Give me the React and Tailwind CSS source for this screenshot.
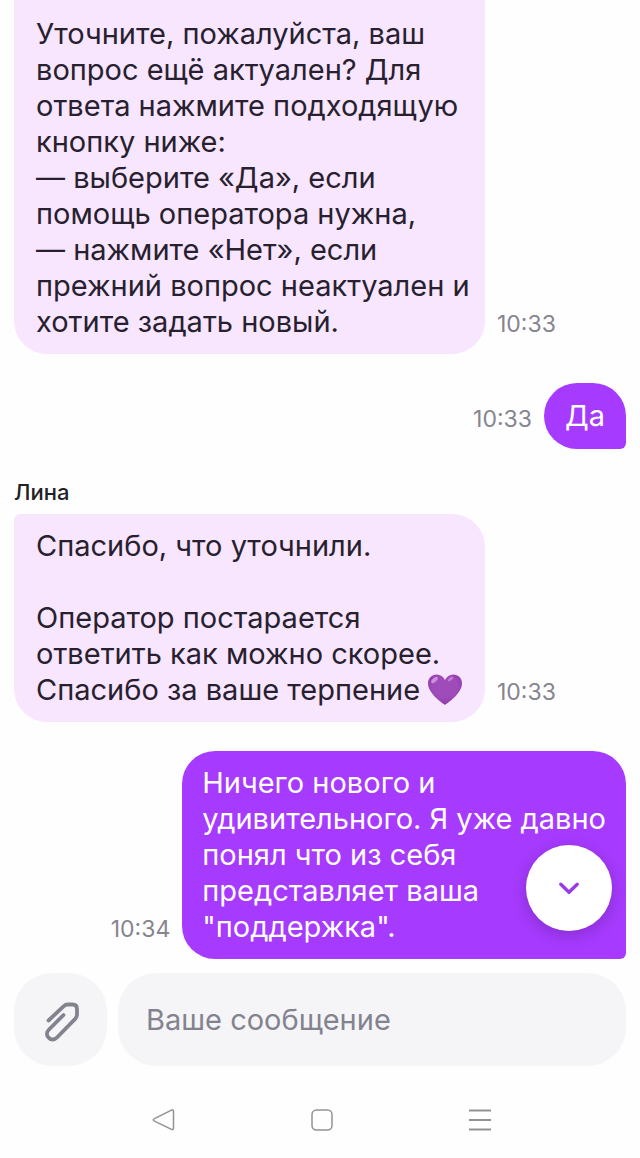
import { useState } from "react";

const messages = [
  {
    id: 1,
    from: "bot",
    continued: true,
    time: "10:33",
    text: `Уточните, пожалуйста, ваш
вопрос ещё актуален? Для
ответа нажмите подходящую
кнопку ниже:
— выберите «Да», если
помощь оператора нужна,
— нажмите «Нет», если
прежний вопрос неактуален и
хотите задать новый.`,
  },
  { id: 2, from: "me", time: "10:33", text: "Да" },
  {
    id: 3,
    from: "bot",
    author: "Лина",
    time: "10:33",
    heart: true,
    text: `Спасибо, что уточнили.

Оператор постарается
ответить как можно скорее.
Спасибо за ваше терпение`,
  },
  {
    id: 4,
    from: "me",
    time: "10:34",
    text: `Ничего нового и
удивительного. Я уже давно
понял что из себя
представляет ваша
"поддержка".`,
  },
];

function Heart() {
  return (
    <svg viewBox="0 0 34 32" className="ml-2 inline-block h-8 w-[34px] align-[-6px]" role="img" aria-label="Фиолетовое сердце">
      <defs>
        <radialGradient id="heart" cx="0.5" cy="0.4" r="0.65">
          <stop offset="0.55" stopColor="#a04bba" />
          <stop offset="1" stopColor="#8a35a5" />
        </radialGradient>
      </defs>
      <path
        d="M17 31C15 29.5 0 19.5 0 9.5C0 4 4 0.5 8.6 0.5C12.5 0.5 15.5 2.6 17 6C18.5 2.6 21.5 0.5 25.4 0.5C30 0.5 34 4 34 9.5C34 19.5 19 29.5 17 31Z"
        fill="url(#heart)"
      />
      <ellipse cx="6.5" cy="6" rx="4" ry="2" transform="rotate(-42 6.5 6)" fill="#cf8ee0" />
      <ellipse cx="22.5" cy="5" rx="3.2" ry="1.4" transform="rotate(-38 22.5 5)" fill="#c27fd6" />
    </svg>
  );
}

function bubbleClass(message) {
  if (message.from === "me") {
    return "flex min-h-[66px] min-w-[82px] items-center justify-center rounded-[33px] rounded-br-md bg-[#a63afe] px-5 py-3.5 text-white";
  }
  // the top of a continued message is scrolled out of view
  if (message.continued) {
    return "w-full max-w-[471px] rounded-b-[33px] bg-[#f7e6fe] px-[22px] pt-4 pb-3.5 text-[#27212f]";
  }
  return "w-full max-w-[471px] rounded-[33px] rounded-tl-md bg-[#f7e6fe] px-[22px] py-3.5 text-[#27212f]";
}

function Message({ message }) {
  const mine = message.from === "me";

  return (
    <div>
      {message.author && (
        <p className="mb-2 text-[22px] leading-7 font-medium text-[#222126]">{message.author}</p>
      )}
      <div className={mine ? "flex flex-row-reverse items-end gap-3" : "flex items-end gap-3"}>
        <div className={bubbleClass(message)}>
          <p className="text-[29px] leading-9 whitespace-pre">
            {message.text}
            {message.heart && <Heart />}
          </p>
        </div>
        <time className="pb-4 text-[23px] leading-7 text-[#85858f]">{message.time}</time>
      </div>
    </div>
  );
}

// system navigation row
function NavBar() {
  return (
    <nav className="flex justify-center gap-[122px] pt-9 pb-4 pl-1 text-[#929292]">
      <button type="button" aria-label="Назад" className="size-9">
        <svg viewBox="0 0 36 36" fill="none" stroke="currentColor" strokeWidth="1.5" strokeLinejoin="round">
          <path d="M8.5 16.6L25 8.3Q27.5 7.2 27.5 9.5V26Q27.5 28.3 25 27.2L8.5 19.1Q6 17.8 8.5 16.6Z" />
        </svg>
      </button>
      <button type="button" aria-label="Домой" className="size-9">
        <svg viewBox="0 0 36 36" fill="none" stroke="currentColor" strokeWidth="1.5">
          <rect x="8" y="8" width="20" height="20" rx="4.5" />
        </svg>
      </button>
      <button type="button" aria-label="Недавние" className="size-9">
        <svg viewBox="0 0 36 36" fill="none" stroke="currentColor" strokeWidth="1.8">
          <path d="M7 8.5H29M7 18H29M7 27.5H29" />
        </svg>
      </button>
    </nav>
  );
}

export default function App() {
  const [draft, setDraft] = useState("");

  return (
    <div className="flex min-h-screen flex-col bg-[#fefefe] font-['Inter',sans-serif]">
      <main className="relative flex flex-col gap-[29px] px-3.5">
        {messages.map((m) => (
          <Message key={m.id} message={m} />
        ))}
        <button
          type="button"
          aria-label="Вниз"
          className="absolute right-7 bottom-7 flex size-[86px] items-center justify-center rounded-full bg-white text-[#9a3be8] shadow-[0_4px_16px_rgba(0,0,0,0.2)]"
        >
          <svg viewBox="0 0 24 16" className="h-4 w-6" fill="none" stroke="currentColor" strokeWidth="3.4" strokeLinecap="round" strokeLinejoin="round">
            <path d="M3.8 4.3L12 12.2L20.2 4.3" />
          </svg>
        </button>
      </main>

      <form className="mt-3.5 flex gap-[11px] px-3.5" onSubmit={(e) => e.preventDefault()}>
        <button
          type="button"
          aria-label="Прикрепить файл"
          className="flex size-[93px] shrink-0 items-center justify-center rounded-[38px] bg-[#f5f5f8] text-[#83838f]"
        >
          <svg viewBox="0 0 60 60" className="size-[60px]" fill="none" stroke="currentColor" strokeWidth="3.8" strokeLinecap="round" strokeLinejoin="round">
            <path d="M17.500 30.500L32.500 16.300Q34.500 14.500 37 14.500H41.500Q46 14.500 46 19V24.500Q46 27 44.200 28.800L26 47.500C23 50.500 19.500 49.800 17.500 47.500C15.300 45.200 15.500 42 18 39.500L32.500 25" />
          </svg>
        </button>
        <input
          type="text"
          aria-label="Ваше сообщение"
          placeholder="Ваше сообщение"
          value={draft}
          onChange={(e) => setDraft(e.target.value)}
          className="h-[93px] min-w-0 flex-1 rounded-[38px] bg-[#f5f5f8] px-7 text-[29px] text-[#27212f] outline-none placeholder:text-[#83838f]"
        />
      </form>

      <NavBar />
    </div>
  );
}
